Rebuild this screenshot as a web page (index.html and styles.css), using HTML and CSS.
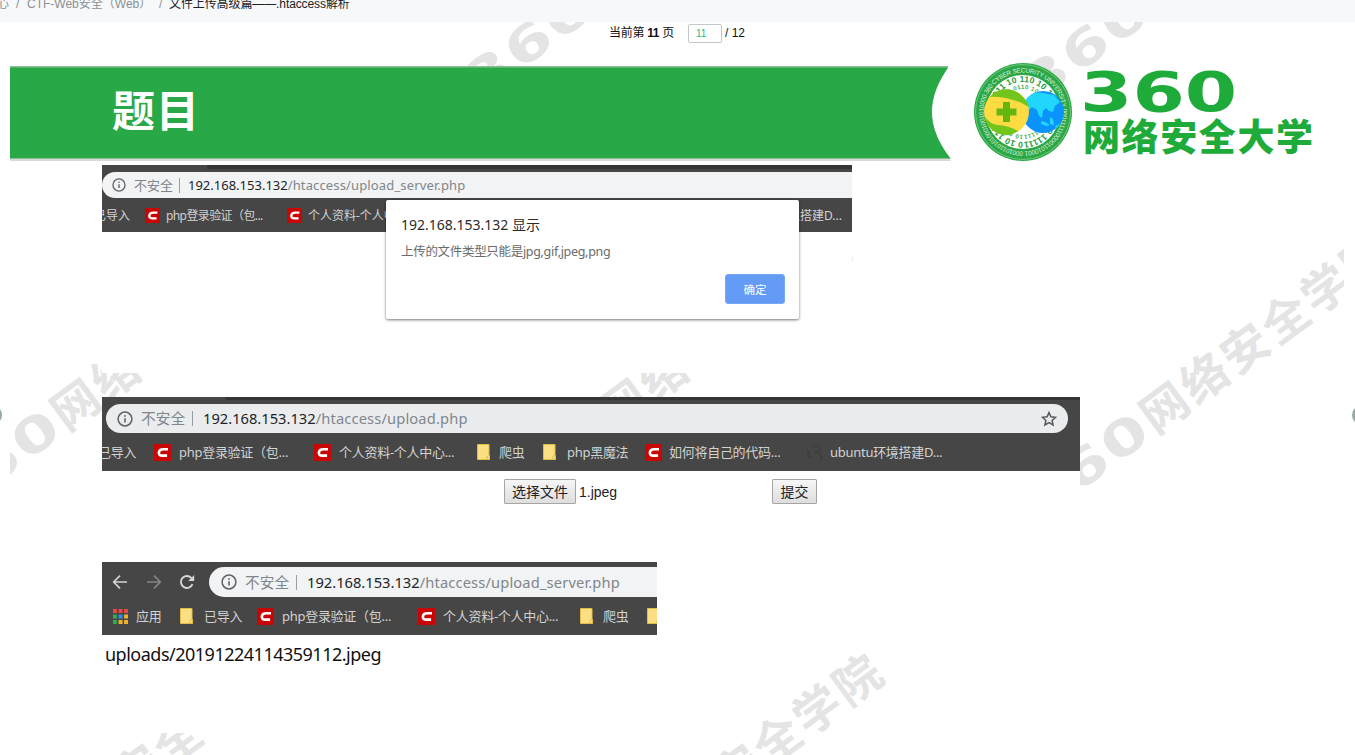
FILE: index.html
```html
<!DOCTYPE html>
<html lang="zh-CN">
<head>
<meta charset="utf-8">
<title>文件上传高级篇——.htaccess解析</title>
<link rel="stylesheet" href="styles.css">
</head>
<body>
<svg class="defs" width="0" height="0" aria-hidden="true">
  <defs>
    <symbol id="i-info" viewBox="0 0 16 16"><circle cx="8" cy="8" r="6.9" fill="none" stroke="#5f6368" stroke-width="1.5"/><path d="M8 7.2v4.2" stroke="#5f6368" stroke-width="1.6"/><circle cx="8" cy="4.9" r=".95" fill="#5f6368"/></symbol>
    <symbol id="i-c" viewBox="0 0 16 16"><rect width="16" height="16" fill="#c90606"/><path d="M13.200 4.900H9C6.200 4.900 4.800 6 4.600 8C4.400 10 5.600 11 8 11H12.300" fill="none" stroke="#fff" stroke-width="2.500"/></symbol>
    <symbol id="i-folder" viewBox="0 0 13 16"><path d="M.5.500h11.500v10l.8 1v4H.5z" fill="#fbdf83" stroke="#e3bd45"/><path d="M10 15.500v-3l2-1.500" fill="none" stroke="#e3b93c"/></symbol>
    <symbol id="i-apps" viewBox="0 0 14 14"><path d="M0 0h3.700v3.700H0zM5.200 0h3.700v3.700H5.200zM10.300 0H14v3.700h-3.700z" fill="#e34b42"/><path d="M0 5.200h3.700v3.700H0zM0 10.300h3.700V14H0z" fill="#35a853"/><path d="M5.200 5.200h3.700v3.700H5.200z" fill="#338bf5"/><path d="M10.300 5.200H14v3.700h-3.700zM5.200 10.300h3.700V14H5.200zM10.300 10.300H14V14h-3.700z" fill="#eeb12b"/></symbol>
    <symbol id="wm" overflow="visible">
      <g transform="rotate(-36.500)" fill="#e4e4e4" text-anchor="middle" font-weight="bold">
        <g font-family="DejaVu Sans" font-size="49">
          <text transform="translate(-148 18) scale(1.350 1)">3</text>
          <text transform="translate(-99 18) scale(1.350 1)">6</text>
          <text transform="translate(-50 18) scale(1.350 1)">0</text>
        </g>
        <g font-family="Noto Sans CJK SC" font-size="47">
          <text x="0" y="18">网</text><text x="50" y="18">络</text><text x="100" y="18">安</text><text x="150" y="18">全</text><text x="200" y="18">学</text><text x="250" y="18">院</text>
        </g>
      </g>
    </symbol>
  </defs>
</svg>

<nav class="crumbs">
  <span class="c0">心</span><span class="c1">/</span><span class="c2">CTF-Web安全（Web）</span><span class="c3">/</span><span class="c4">文件上传高级篇——.htaccess解析</span>
</nav>

<main class="viewer">
  <svg class="marks" viewBox="10 22 1334 733" width="1334" height="733">
    <use href="#wm" x="607" y="-16"/><use href="#wm" x="1164" y="-12"/>
    <use href="#wm" x="75" y="404"/><use href="#wm" x="623" y="404"/><use href="#wm" x="1164" y="407"/>
    <use href="#wm" x="56" y="828"/><use href="#wm" x="656" y="828"/>
  </svg>

  <div class="pager"><span class="now">当前第 <b>11</b> 页</span><span class="num">11</span><span>/ 12</span></div>

  <header class="title">
    <svg class="band" width="945" height="98" viewBox="0 0 945 98">
      <path d="M0 3H938Q905 49 941 96H0z" fill="#d3ddd5"/>
      <path d="M0 1H938.500C916 34 916 62 941 94H0z" fill="#8fbd98"/>
      <path d="M0 2.500H938C916 35 916 61 940 93H0z" fill="#29a847"/>
    </svg>
    <h1>题目</h1>
    <svg class="emblem" width="100" height="100" viewBox="-50 -50 100 100">
      <defs>
        <path id="ring" d="M0 39.500A39.500 39.500 0 1 1 .01 39.500"/>
        <path id="r2" d="M0 30A30 30 0 1 1 .01 30"/>
        <path id="r3" d="M0 23A23 23 0 1 1 .01 23"/>
        <clipPath id="globe"><circle cx="20" cy="0" r="21"/></clipPath>
      </defs>
      <circle r="49" fill="#2ca745"/><circle r="47.500" fill="none" stroke="#6fc77e"/><circle r="37" fill="#fff"/>
      <text class="ringtext thin" fill="#d8f0dc" font-size="6.400"><textPath href="#ring" textLength="246">000101101010001001010000 360 CYBER SECURITY UNIVERSITY 00011111000011010001</textPath></text>
      <text class="ringtext" fill="#279b3b" font-size="8.500"><textPath href="#r2" textLength="187">0 10 110 01101 011 10 110 10 10 10 0110 11111</textPath></text>
      <text class="ringtext" fill="#4aad58" font-size="6"><textPath href="#r3" textLength="143">10 0110 110 011 10 0110 10 10 10 0110 11111</textPath></text>
      <circle cx="20" cy="0" r="21" fill="#0a94fb"/>
      <g clip-path="url(#globe)" fill="#20d6fb"><path d="M2-13L10-20 20-19 31-17 37-10 32-6 30 0 26-1 23-4 20-1 19 6 16 4 14-2 9-5 5-1 3-5z"/><path d="M18 9l4 1 5 3-3 1-6-2zM27 5l3 2 1 6-4-1zM32 14l5-2 2 4-5 3z"/></g>
      <circle cx="-16.500" cy="0" r="22.500" fill="#fddb43"/>
      <path d="M-33-15C-26-25-10-25-2-17Q5-11 6-5Q-2-10-10-12Q-23-16-33-15z" fill="#72c51b"/>
      <path d="M-38 5Q-33 12-25 13Q-13 14-5 19Q-16 27-28 20Q-37 14-38 5z" fill="#72c51b"/>
      <path d="M-20-10h7v6.500h6.500v7h-6.500V10h-7V3.500h-6.500v-7h6.500z" fill="#63b70f"/>
    </svg>
    <svg class="brand" width="240" height="100" viewBox="0 0 240 100">
      <g fill="#1fab3a" font-weight="bold">
        <text transform="translate(-3 49) scale(1.300 1)" y="0" font-family="DejaVu Sans" font-size="56" textLength="121" lengthAdjust="spacingAndGlyphs">360</text>
        <text x="0" y="89" font-family="Noto Sans CJK SC" font-weight="900" font-size="37" textLength="230">网络安全大学</text>
      </g>
    </svg>
  </header>

  <section class="shot shot1">
    <div class="chrome">
      <div class="tabs"></div>
      <div class="address"><svg><use href="#i-info"/></svg><span class="warn">不安全</span><i></i><span class="url"><b>192.168.153.132</b>/htaccess/upload_server.php</span></div>
      <div class="marksbar">
        <span class="cut">已导入</span><svg><use href="#i-c"/></svg><span class="tight">php登录验证（包...</span><svg><use href="#i-c"/></svg><span>个人资料-个人中心...</span><span class="tail">ubuntu环境搭建D...</span>
      </div>
    </div>
    <div class="dialog">
      <h2>192.168.153.132 显示</h2>
      <p>上传的文件类型只能是jpg,gif,jpeg,png</p>
      <button>确定</button>
    </div>
  </section>

  <section class="shot shot2">
    <div class="chrome">
      <div class="tabs"></div>
      <div class="address"><svg><use href="#i-info"/></svg><span class="warn">不安全</span><i></i><span class="url"><b>192.168.153.132</b>/htaccess/upload.php</span>
        <svg class="star" viewBox="0 0 16 16"><path d="M8 1.500l1.900 4.300 4.700.5-3.500 3.100 1 4.600L8 11.600 3.900 14l1-4.600L1.400 6.300l4.700-.5z" fill="none" stroke="#555a5e" stroke-width="1.500"/></svg></div>
      <div class="marksbar">
        <span class="cut">已导入</span><svg><use href="#i-c"/></svg><span>php登录验证（包...</span><svg><use href="#i-c"/></svg><span>个人资料-个人中心...</span><svg class="f"><use href="#i-folder"/></svg><span>爬虫</span><svg class="f"><use href="#i-folder"/></svg><span>php黑魔法</span><svg><use href="#i-c"/></svg><span>如何将自己的代码...</span><svg viewBox="0 0 16 16"><path d="M1 6v5l3 2M6 3q5-3 6 1t-5 4q5-2 7 6" fill="none" stroke="#3d3d3d" stroke-width="1.500"/></svg><span>ubuntu环境搭建D...</span>
      </div>
    </div>
    <div class="form"><button>选择文件</button><span class="file">1.jpeg</span><button class="submit">提交</button></div>
  </section>

  <section class="shot shot3">
    <div class="chrome">
      <div class="toolbar">
        <svg viewBox="0 0 16 16"><path d="M15 8H2M8 1.700L1.700 8 8 14.300" fill="none" stroke="#d5d5d5" stroke-width="1.700"/></svg>
        <svg viewBox="0 0 16 16"><path d="M1 8h13M8 1.700L14.300 8 8 14.300" fill="none" stroke="#858585" stroke-width="1.700"/></svg>
        <svg viewBox="0 0 16 16"><path d="M13.500 10.200A6 6 0 1 1 12.300 3.800L14 5.500" fill="none" stroke="#d5d5d5" stroke-width="1.900"/><path d="M15.200 1v6h-6z" fill="#d5d5d5"/></svg>
        <div class="address"><svg><use href="#i-info"/></svg><span class="warn">不安全</span><i></i><span class="url"><b>192.168.153.132</b>/htaccess/upload_server.php</span></div>
      </div>
      <div class="marksbar">
        <svg class="apps"><use href="#i-apps"/></svg><span>应用</span><svg class="f"><use href="#i-folder"/></svg><span>已导入</span><svg><use href="#i-c"/></svg><span>php登录验证（包...</span><svg><use href="#i-c"/></svg><span>个人资料-个人中心...</span><svg class="f"><use href="#i-folder"/></svg><span>爬虫</span><svg class="f"><use href="#i-folder"/></svg>
      </div>
    </div>
    <p class="result">uploads/20191224114359112.jpeg</p>
  </section>
  <span class="turn prev"></span><span class="turn next"></span>
</main>
</body>
</html>
```
FILE: styles.css
```css
* { box-sizing: border-box; }
body { margin: 0; width: 1355px; height: 755px; overflow: hidden; background: #fff; font-family: "Noto Sans", "Noto Sans CJK SC", sans-serif; }
h1, h2, p { margin: 0; font-weight: normal; }
i { font-style: normal; }
b { font-weight: normal; }
svg { display: block; flex: none; }
.defs { position: absolute; }

.crumbs { height: 22px; background: #f6f8fa; overflow: hidden; display: grid; grid-template-columns: 16px 11px 132px 10px 1fr; font: 12px/18px "Liberation Sans", "Noto Sans CJK SC", sans-serif; color: #8b9096; white-space: nowrap; }
.crumbs span { margin-top: -5px; }
.crumbs .c0 { margin-left: -3px; }
.crumbs .c4 { color: #222; letter-spacing: -.1px; }

.viewer { position: relative; height: 733px; overflow: hidden; padding: 0 0 0 10px; }
.marks { position: absolute; left: 10px; top: 0; }
.pager { position: relative; height: 42px; padding: 2px 0 0 599px; display: flex; align-items: flex-start; font: 12px/18px "Liberation Sans", "Noto Sans CJK SC", sans-serif; color: #111; }
.pager b { font-weight: bold; }
.pager .now { width: 65px; letter-spacing: -.3px; white-space: nowrap; }
.pager .num { width: 34px; height: 19px; margin: 0 3px 0 14px; padding-left: 7px; border: 1px solid #c4c8cb; border-radius: 2px; background: #fff; color: #1fb887; font-size: 10px; line-height: 18px; }

.title { position: relative; height: 101px; display: flex; }
.title h1 { margin-left: -843px; width: 853px; padding-top: 14px; font: bold 43px/60px "Noto Sans CJK SC", sans-serif; color: #fff; letter-spacing: 1px; }
.band { margin-top: 1px; }
.emblem { margin: -2px 0 0 8px; }
.brand { margin: -2px 0 0 10px; }

.shot { position: relative; margin-left: 92px; background: #fff; }
.chrome { background: #464646; overflow: hidden; }
.tabs { height: 4px; background: #353535; }
.address { display: flex; align-items: center; background: #f1f3f4; color: #80868b; white-space: nowrap; line-height: 20px; }
.address b { color: #222427; letter-spacing: 0; }
.address i { width: 1px; height: 15px; background: #9a9da0; }
.address .url { letter-spacing: .14px; }
.address .warn { margin-top: -1px; }
.marksbar { display: grid; align-items: center; color: #d2d2d2; white-space: nowrap; overflow: hidden; }
.marksbar svg { width: 17px; height: 17px; }
.marksbar .f { width: 13px; height: 16px; }
.marksbar .apps { width: 15px; height: 15px; }

.shot1 { width: 750px; height: 208px; }
.shot1 .chrome { height: 67px; }
.shot1 .tabs { margin: 0 0 3px 105px; }
.shot1 .address { height: 26px; padding-left: 10px; border-radius: 13px 0 0 13px; font-size: 13px; }
.shot1 .address svg { width: 14px; height: 14px; }
.shot1 .warn { margin-left: 8px; width: 45px; }
.shot1 .url { margin-left: 8px; }
.shot1 .marksbar { height: 34px; margin-left: -10px; font-size: 12px; grid-template-columns: 52px 22px 120px 22px 450px 84px; }
.shot1 .cut { padding-left: 2px; }
.shot1 .tight { letter-spacing: -.6px; }
.shot1 .marksbar svg { width: 15px; height: 15px; margin-left: 1px; }
.shot1 .tail { justify-self: end; }
.dialog { position: absolute; left: 284px; top: 35px; width: 413px; height: 119px; padding: 14px 14px 0 15px; background: #fff; border-radius: 2px; box-shadow: 0 1px 3px rgba(0,0,0,.55); }
.dialog h2 { font-size: 14px; line-height: 22px; color: #2b2b2b; }
.dialog p { margin-top: 6px; font-size: 12.500px; letter-spacing: -.31px; line-height: 20px; color: #6b6b6b; }
.dialog button { display: block; margin: 12px 0 0 auto; width: 60px; height: 30px; border: 1px solid #76a7f8; border-radius: 3px; background: #639bf6; color: #fff; font: 11.500px "Noto Sans CJK SC", sans-serif; }

.shot2 { margin-top: 24px; width: 978px; height: 130px; }
.shot2 .chrome { height: 74px; }
.shot2 .tabs { height: 3px; margin: 0 0 4px 124px; }
.shot2 .address { height: 29px; margin: 0 12px 0 4px; padding: 0 11px; border-radius: 15px; background: #eaecee; font-size: 14.700px; }
.shot2 .address svg, .shot3 .address svg { width: 16px; height: 16px; }
.address .star { margin-left: auto; }
.shot2 .warn, .shot3 .warn { margin-left: 8px; width: 51px; }
.shot2 .url, .shot3 .url { margin-left: 10px; margin-top: -1px; }
.shot2 .marksbar { height: 38px; margin-left: -4px; font-size: 13px; letter-spacing: -.28px; grid-template-columns: 56px 25px 135px 25px 138px 22px 44px 24px 78px 24px 138px 23px 1fr; }
.shot2 .marksbar span, .shot3 .marksbar span { margin-top: -2px; }
.form { display: flex; align-items: center; padding: 8px 0 0 402px; font: 14px "Liberation Sans", "Noto Sans CJK SC", sans-serif; color: #222; }
.form button { width: 72px; height: 25px; padding: 0 0 1px; border: 1px solid #a5a5a5; border-radius: 1px; background: linear-gradient(#f6f6f6, #dedede); font: 14px "Noto Sans CJK SC", sans-serif; color: #222; }
.form .file { width: 196px; padding-left: 3px; }
.form .submit { width: 45px; }

.shot3 { margin-top: 35px; width: 555px; height: 171px; }
.shot3 .chrome { height: 73px; padding-top: 5px; }
.toolbar { display: grid; grid-template-columns: 34px 33px 31px 1fr; align-items: center; padding-left: 10px; }
.toolbar > svg { width: 16px; height: 16px; }
.shot3 .address { height: 30px; margin-left: -1px; padding-left: 12px; border-radius: 15px 0 0 15px; font-size: 14.700px; }
.shot3 .marksbar { height: 38px; padding-left: 11px; font-size: 13px; letter-spacing: -.28px; grid-template-columns: 23px 44px 24px 53px 25px 136px 25px 137px 23px 44px 13px; }
.result { padding-left: 3px; font-size: 18px; letter-spacing: -.5px; line-height: 38px; color: #111; }

.turn { position: absolute; top: 383px; width: 20px; height: 20px; border-radius: 50%; background: #97aaa2; }
.prev { left: -18px; }
.next { right: -17px; }
.ringtext { font-family: "Liberation Sans", sans-serif; font-weight: bold; }
.thin { font-weight: normal; }
```
